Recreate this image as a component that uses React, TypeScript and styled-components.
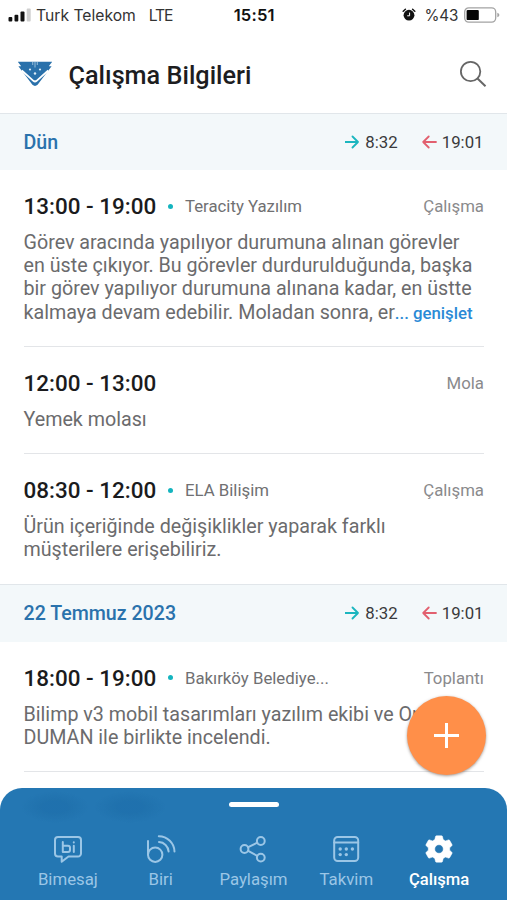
import React from 'react';
import styled, { createGlobalStyle } from 'styled-components';

const GlobalStyle = createGlobalStyle`
  * { box-sizing: border-box; }
  body { margin: 0; background: #fff; font-family: Roboto, sans-serif; }
  svg { display: block; flex: none; }
`;

const Screen = styled.div`
  position: relative;
  height: 900px;
  overflow: hidden;
  display: flex;
  flex-direction: column;
  background: #fff;
`;

const StatusBar = styled.div`
  height: 30px;
  flex: none;
  display: grid;
  grid-template-columns: 1fr auto 1fr;
  align-items: center;
  padding: 0 7.5px 0 8px;
  color: #333;
  font-family: Inter, sans-serif;
  font-size: 15.7px;
`;

const StatusGroup = styled.div<{ $end?: boolean }>`
  display: flex;
  align-items: center;
  justify-content: ${(p) => (p.$end ? 'flex-end' : 'flex-start')};
`;

const Carrier = styled.span`
  margin: 0 13px 0 5px;
`;

const Network = styled.span`
  font-size: 15.7px;
  letter-spacing: -1.2px;
`;

const Clock = styled.span`
  margin-left: 1px;
  color: #111;
  font-size: 16.6px;
  font-weight: 600;
  letter-spacing: 0.2px;
`;

const Percent = styled.span`
  margin: 0 5px 0 8px;
  font-size: 15.2px;
`;

const Header = styled.header`
  height: 84px;
  flex: none;
  display: flex;
  align-items: center;
  padding: 5px 20px 0 17px;
  border-bottom: 1.5px solid #e1e6ea;
`;

const Title = styled.h1`
  flex: 1;
  margin: 3px 0 0 15.5px;
  color: #1d1d1f;
  font-size: 25.25px;
  font-weight: 500;
  line-height: 30px;
`;

const DayBar = styled.div<{ $ruled?: boolean }>`
  height: ${(p) => (p.$ruled ? 58 : 56)}px;
  flex: none;
  display: flex;
  align-items: center;
  padding: 0 23.5px;
  background: #f3f8fa;
  border-top: ${(p) => (p.$ruled ? '1.5px solid #e1e6ea' : 'none')};
`;

const DayName = styled.h2`
  flex: 1;
  margin: 0;
  color: #2a72ac;
  font-size: 19.6px;
  font-weight: 500;
`;

const Stamp = styled.div`
  display: flex;
  align-items: center;
  gap: 5px;
  margin-left: 24px;
  color: #3a3a3c;
  font-size: 16.8px;
  line-height: 20px;
`;

const List = styled.div`
  flex: none;
  padding: 0 23px 0 23.5px;
`;

const Entry = styled.article`
  padding: 24px 0 22px;

  & + & { border-top: 1.2px solid #e3e5e8; }
`;

const EntryHead = styled.div`
  display: flex;
  align-items: center;
  height: 24px;
`;

const Hours = styled.span`
  color: #1b1b1d;
  font-size: 22.45px;
  font-weight: 500;
`;

const Dot = styled.span`
  width: 5px;
  height: 5px;
  margin: 0 11.5px 0 12.3px;
  border-radius: 50%;
  background: #14b4bf;
`;

const Company = styled.span`
  color: #707072;
  font-size: 16.8px;
`;

const Kind = styled.span`
  margin-left: auto;
  color: #8a8a8c;
  font-size: 16.8px;
`;

const Note = styled.p`
  margin: 12.9px 0 0;
  color: #6b6b6d;
  font-size: 19.7px;
  line-height: 23.3px;
  white-space: nowrap;
`;

const Expand = styled.span`
  color: #2a8ad6;
  font-size: 16.8px;
  font-weight: 500;
  line-height: 0;
`;

const AddButton = styled.button`
  position: absolute;
  left: 406.6px;
  top: 695.7px;
  width: 79px;
  height: 79px;
  padding: 0;
  display: grid;
  place-items: center;
  border: 0;
  border-radius: 50%;
  background: #ff8f49;
  box-shadow: 0 1px 3px rgba(70, 50, 40, 0.5);
`;

const TabBar = styled.nav`
  position: absolute;
  left: 0;
  right: 0;
  bottom: 0;
  height: 112.5px;
  display: flex;
  flex-direction: column;
  align-items: center;
  padding: 14.5px 21.5px 0;
  border-radius: 22px 22px 0 0;
  background:
    radial-gradient(ellipse 34px 16px at 55px 19px, rgba(24, 103, 162, 0.35) 40%, transparent),
    radial-gradient(ellipse 36px 16px at 130px 19px, rgba(24, 103, 162, 0.35) 40%, transparent),
    #2477b3;
`;

const Grip = styled.div`
  width: 50px;
  height: 4.5px;
  border-radius: 3px;
  background: #fff;
`;

const Tabs = styled.div`
  align-self: stretch;
  display: grid;
  grid-template-columns: repeat(5, 1fr);
  margin-top: 27.5px;
`;

const Tab = styled.div<{ $active?: boolean }>`
  display: flex;
  flex-direction: column;
  align-items: center;
  gap: 5px;
  color: ${(p) => (p.$active ? '#fff' : '#9bc6e6')};
  font-size: ${(p) => (p.$active ? 16.6 : 16.8)}px;
  font-weight: ${(p) => (p.$active ? 500 : 400)};
  line-height: 21px;
`;

const Signal = () => (
  <svg width="23" height="14" viewBox="0 0 23 14">
    <rect x="0.5" y="9" width="3.8" height="4.5" rx="1" fill="#111" />
    <rect x="6.5" y="6.8" width="3.8" height="6.7" rx="1" fill="#111" />
    <rect x="12.5" y="3.5" width="4" height="10" rx="1" fill="#111" />
    <rect x="18.7" y="0.5" width="4" height="13" rx="1" fill="#cfcfcf" />
  </svg>
);

const Alarm = () => (
  <svg width="14" height="14" viewBox="0 0 14 14">
    <circle cx="7" cy="7.2" r="5.4" fill="#111" />
    <path d="M1.2 3.2 3.4 1.3M12.8 3.2 10.6 1.3" stroke="#111" strokeWidth="1.5" strokeLinecap="round" />
    <path d="M7.6 4.6v3.2H5.2" stroke="#fff" strokeWidth="1" fill="none" />
  </svg>
);

const Battery = () => (
  <svg width="36" height="16" viewBox="0 0 36 16">
    <rect x="0.7" y="0.9" width="31" height="14.2" rx="4" fill="none" stroke="#a3a3a3" strokeWidth="1.3" />
    <rect x="2.6" y="2.9" width="12.2" height="10.2" rx="1.2" fill="#050505" />
    <path d="M33.3 5.7c1.5.6 2 1.3 2 2.3s-.5 1.7-2 2.3z" fill="#a3a3a3" />
  </svg>
);

const Logo = () => (
  <svg width="36" height="26" viewBox="0 0 36 26">
    <path d="M.8.8h34.4l-3.4 4.4h2.8L20.6 23.8q-2.600 2.200-5.200 0L1.400 5.200h2.800z" fill="#2a71ab" />
    <path d="M4.800 9.500 16.400 19.800q1.600 1.300 3.200 0L31.200 9.500" fill="none" stroke="#fff" strokeWidth="1.800" />
    <path d="M18 1v5.500M15.700 1v3M20.300 1v3" fill="none" stroke="#8fb8d8" strokeWidth="1.100" />
    <g fill="#dcebf6">
      <circle cx="18" cy="12.500" r="1.200" />
      <circle cx="13" cy="8.500" r="1.100" />
      <circle cx="23" cy="8.500" r="1.100" />
    </g>
  </svg>
);

const Search = () => (
  <svg width="28" height="28" viewBox="0 0 28 28" fill="none" stroke="#666" strokeWidth="1.8">
    <circle cx="11.6" cy="11.5" r="9.7" />
    <path d="m18.5 18.5 8 7.8" strokeWidth="2" />
  </svg>
);

const Arrow = ({ back }: { back?: boolean }) => (
  <svg width="15" height="14" viewBox="0 0 15 14" fill="none" stroke={back ? '#e2606f' : '#1bb6bf'} strokeWidth="1.8" strokeLinecap="round" strokeLinejoin="round">
    <path d={back ? 'M14 7H1.2M6.7 1.5 1.2 7 6.7 12.5' : 'M.2 7h12.8M7.5 1.5 13 7 7.5 12.5'} />
  </svg>
);

const Icon = ({ children }: { children: React.ReactNode }) => (
  <svg width="30" height="30" viewBox="0 0 30 30" fill="none" stroke="currentColor" strokeWidth="2" strokeLinecap="round" strokeLinejoin="round">
    {children}
  </svg>
);

const Message = () => (
  <Icon>
    <path d="M5 3h20a3 3 0 0 1 3 3v13.5a3 3 0 0 1-3 3H15.5L8.7 27.8v-5.3H5a3 3 0 0 1-3-3V6a3 3 0 0 1 3-3Z" />
    <path d="M9.8 8v10h5.2a2 2 0 0 0 2-2v-2.2a2 2 0 0 0-2-2H9.8M20.8 11.8V18M20.8 8.3v.2" />
  </Icon>
);

const Broadcast = () => (
  <Icon>
    <path d="M2 7v13.5" />
    <circle cx="9.2" cy="20.7" r="7.2" />
    <path d="M12.8 2.2A16 15.6 0 0 1 28.5 17.5M13 8.1A10 10 0 0 1 22.6 17.5" />
  </Icon>
);

const Share = () => (
  <Icon>
    <circle cx="6.5" cy="15" r="3.9" /><circle cx="22.8" cy="7" r="3.9" /><circle cx="22.8" cy="23.6" r="3.9" />
    <path d="m10.2 13.2 9-4.5M10.2 16.8l9 5" />
  </Icon>
);

const Calendar = () => (
  <Icon>
    <rect x="3.2" y="3" width="24" height="24" rx="3.5" />
    <path d="M3.2 8.5h24" />
    <g fill="currentColor" stroke="none">
      <circle cx="9.2" cy="15" r="1.7" /><circle cx="15.3" cy="15" r="1.7" /><circle cx="21.4" cy="15" r="1.7" />
      <circle cx="9.2" cy="20.6" r="1.7" /><circle cx="15.3" cy="20.6" r="1.7" />
    </g>
  </Icon>
);

const Gear = () => (
  <svg width="30" height="30" viewBox="0 0 30 30">
    <path
      fill="#fff"
      stroke="#fff"
      strokeWidth=".5"
      strokeLinejoin="round"
      fillRule="evenodd"
      d="M12.5 1.8h5a1 1 0 0 1 1 .8l.7 3 2.3 1.3 2.9-1a1 1 0 0 1 1.2.4l2.4 4.2a1 1 0 0 1-.2 1.3l-2.1 2v2.4l2.1 2a1 1 0 0 1 .2 1.3l-2.4 4.2a1 1 0 0 1-1.2.4l-2.9-1-2.3 1.3-.7 3a1 1 0 0 1-1 .8h-5a1 1 0 0 1-1-.8l-.7-3-2.3-1.3-2.9 1a1 1 0 0 1-1.2-.4L2 19.5a1 1 0 0 1 .2-1.3l2.1-2v-2.4l-2.1-2A1 1 0 0 1 2 10.5l2.4-4.2a1 1 0 0 1 1.2-.4l2.9 1 2.3-1.3.7-3a1 1 0 0 1 1-.8ZM15 10.7a4.300 4.300 0 1 0 0 8.600 4.300 4.300 0 0 0 0-8.600Z"
    />
  </svg>
);

const Day = ({ name, ruled }: { name: string; ruled?: boolean }) => (
  <DayBar $ruled={ruled}>
    <DayName>{name}</DayName>
    <Stamp><Arrow />8:32</Stamp>
    <Stamp><Arrow back />19:01</Stamp>
  </DayBar>
);

type WorkProps = { hours: string; company?: string; kind: string; children: React.ReactNode };

const Work = ({ hours, company, kind, children }: WorkProps) => (
  <Entry>
    <EntryHead>
      <Hours>{hours}</Hours>
      {company && <><Dot /><Company>{company}</Company></>}
      <Kind>{kind}</Kind>
    </EntryHead>
    <Note>{children}</Note>
  </Entry>
);

export default function App() {
  return (
    <Screen>
      <GlobalStyle />
      <StatusBar>
        <StatusGroup><Signal /><Carrier>Turk Telekom</Carrier><Network>LTE</Network></StatusGroup>
        <Clock>15:51</Clock>
        <StatusGroup $end><Alarm /><Percent>%43</Percent><Battery /></StatusGroup>
      </StatusBar>
      <Header><Logo /><Title>Çalışma Bilgileri</Title><Search /></Header>
      <Day name="Dün" />
      <List>
        <Work hours="13:00 - 19:00" company="Teracity Yazılım" kind="Çalışma">
          Görev aracında yapılıyor durumuna alınan görevler<br />
          en üste çıkıyor. Bu görevler durdurulduğunda, başka<br />
          bir görev yapılıyor durumuna alınana kadar, en üstte<br />
          kalmaya devam edebilir. Moladan sonra, er<Expand>... genişlet</Expand>
        </Work>
        <Work hours="12:00 - 13:00" kind="Mola">Yemek molası</Work>
        <Work hours="08:30 - 12:00" company="ELA Bilişim" kind="Çalışma">
          Ürün içeriğinde değişiklikler yaparak farklı<br />
          müşterilere erişebiliriz.
        </Work>
      </List>
      <Day name="22 Temmuz 2023" ruled />
      <List>
        <Work hours="18:00 - 19:00" company="Bakırköy Belediye..." kind="Toplantı">
          Bilimp v3 mobil tasarımları yazılım ekibi ve Onur<br />
          DUMAN ile birlikte incelendi.
        </Work>
        <Entry />
      </List>
      <AddButton aria-label="Ekle">
        <svg width="27" height="27" viewBox="0 0 27 27" stroke="#fff" strokeWidth="3">
          <path d="M13.5 1v25M1 13.5h25" />
        </svg>
      </AddButton>
      <TabBar>
        <Grip />
        <Tabs>
          <Tab><Message />Bimesaj</Tab>
          <Tab><Broadcast />Biri</Tab>
          <Tab><Share />Paylaşım</Tab>
          <Tab><Calendar />Takvim</Tab>
          <Tab $active><Gear />Çalışma</Tab>
        </Tabs>
      </TabBar>
    </Screen>
  );
}
